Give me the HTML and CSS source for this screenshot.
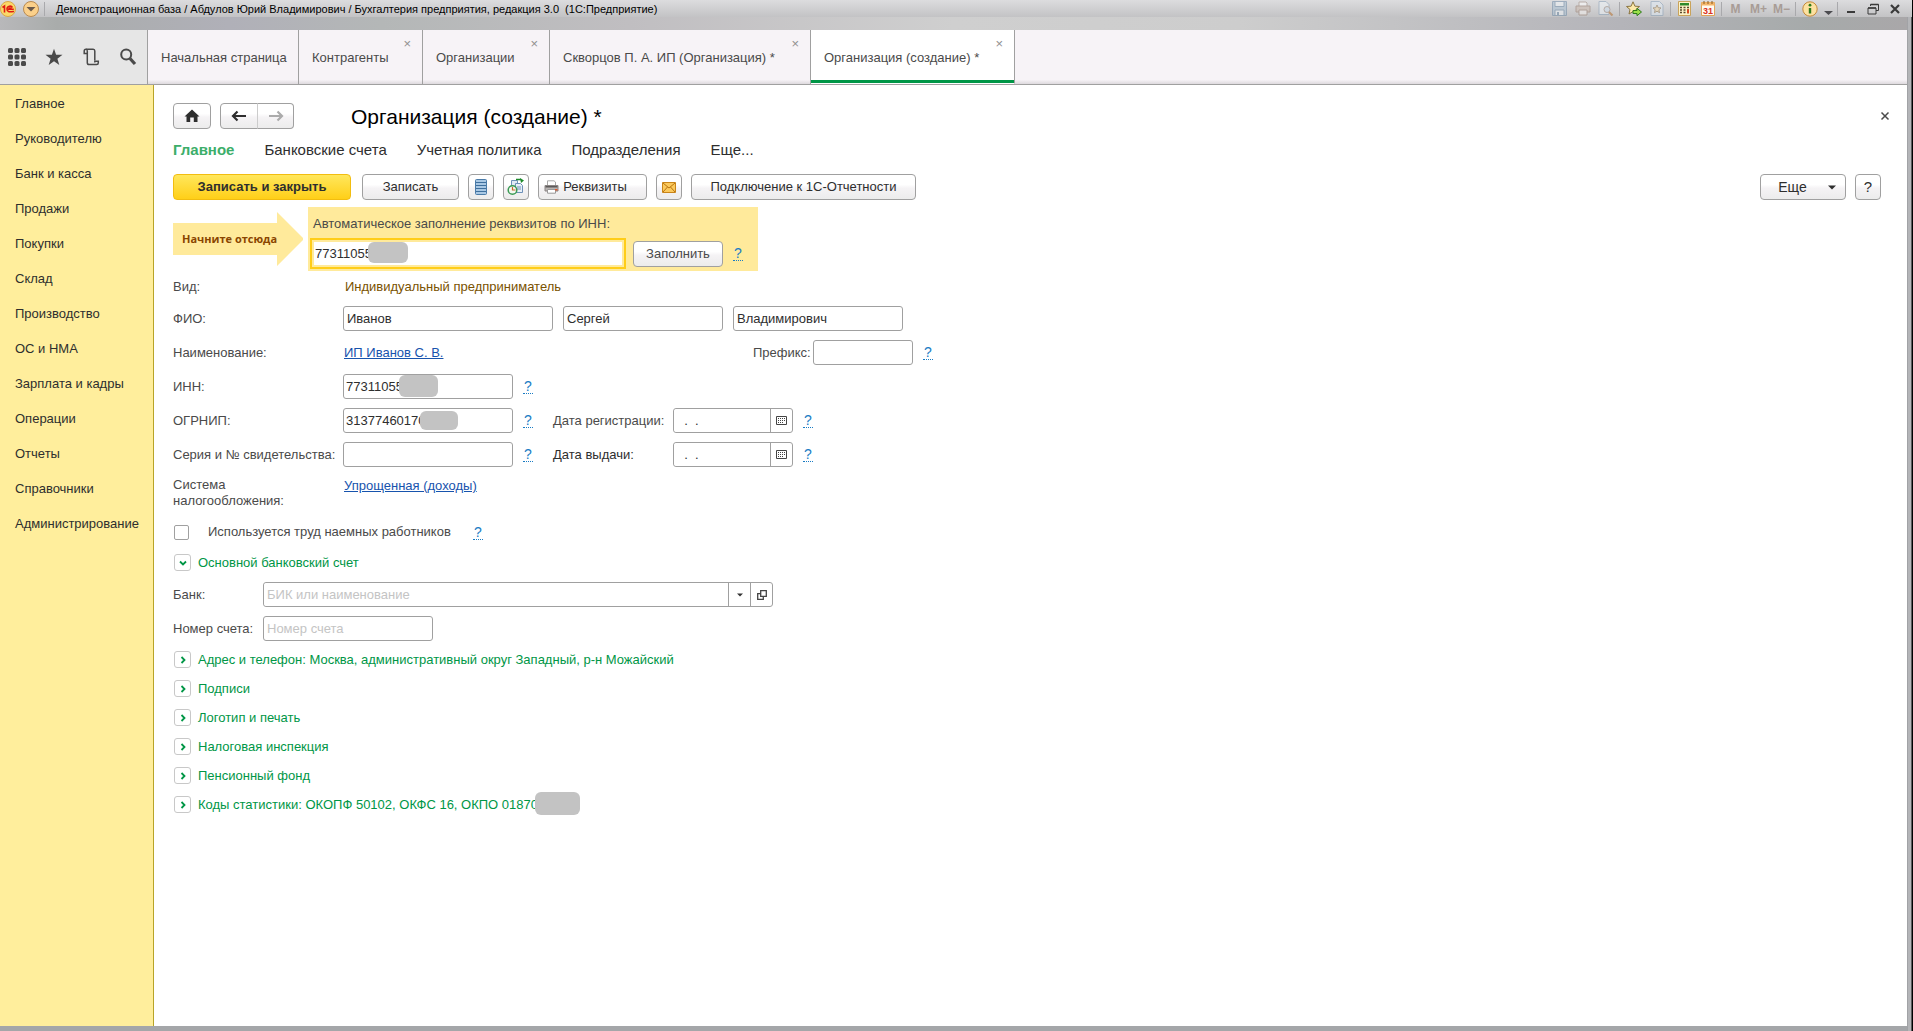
FILE: index.html
```html
<!DOCTYPE html>
<html lang="ru">
<head>
<meta charset="utf-8">
<title>Организация (создание)</title>
<link rel="stylesheet" href="styles.css">
</head>
<body>
<div class="window">
  <header class="titlebar">
    <svg class="logo" width="16" height="16" viewBox="0 0 16 16"><circle cx="8" cy="8" r="7.5" fill="#fbd968" stroke="#d9a64a"/><path d="M2.5 6.5 4.5 5v6.500M12.500 6.500C11.500 4.500 7 4.500 7 8s3 3 7 2.500M11.500 7.500C10 6.500 8.800 7 8.800 8.200h5" fill="none" stroke="#e01b12" stroke-width="1.600"/></svg>
    <button class="tb-btn" aria-label="Меню"><svg width="16" height="16" viewBox="0 0 16 16"><circle cx="8" cy="8" r="7.500" fill="#fbd08a" stroke="#b98a50"/><path d="M3.500 6h9L8 10.500z" fill="#6b5a4c"/></svg></button>
    <span class="tb-sep first"></span>
    <span class="tb-title">Демонстрационная база / Абдулов Юрий Владимирович / Бухгалтерия предприятия, редакция 3.0&nbsp; (1С:Предприятие)</span>
    <div class="tb-tools">
      <button class="tb-btn dim" aria-label="Сохранить"><svg width="15" height="15" viewBox="0 0 15 15"><path d="M.5.5h14v14H.5z" fill="#a9bfd2" stroke="#6f8ba6"/><path d="M3 .5h9v5H3zM3 9h9v5.500H3z" fill="#eef3f7" stroke="#6f8ba6"/><path d="M5 11h2v3H5z" fill="#6f8ba6"/></svg></button>
      <button class="tb-btn dim" aria-label="Печать"><svg width="16" height="15" viewBox="0 0 16 15"><path d="M4 5V1h7l1 1v3" fill="#fff" stroke="#a08c80"/><path d="M1 5h14v6H1z" fill="#cbb9ac" stroke="#977f70"/><path d="M4 9h8v5H4z" fill="#f5f1ee" stroke="#977f70"/></svg></button>
      <button class="tb-btn dim" aria-label="Просмотр"><svg width="16" height="15" viewBox="0 0 16 15"><path d="M1 .5h7l3 3v10H1z" fill="#eef3f7" stroke="#8aa1b8"/><circle cx="9" cy="8.500" r="3" fill="#cfe0ef" stroke="#a08c80"/><path d="m11 11 3.500 3.500" stroke="#b5702e" stroke-width="2"/></svg></button>
      <span class="tb-sep"></span>
      <button class="tb-btn" aria-label="В избранное"><svg width="16" height="16" viewBox="0 0 16 16"><path d="m7 .8 1.900 4.400 4.600.3-3.500 3 1 4.500L7 10.600 3 13l1-4.500-3.500-3 4.600-.3z" fill="#fde9a8" stroke="#8a7440"/><path d="M7 9.500h4V7.300l4.500 3.700-4.500 3.700v-2.200H7z" fill="#9be04a" stroke="#2f7a1c"/></svg></button>
      <button class="tb-btn dim" aria-label="Избранное"><svg width="14" height="15" viewBox="0 0 14 15"><path d="M1 .5h8.500L13 4v10.500H1z" fill="#dfe9f2" stroke="#8aa1b8"/><path d="m7 4 1.200 2.700 2.800.2-2.100 1.900.6 2.800L7 10.200l-2.500 1.400.6-2.800L3 6.900l2.800-.2z" fill="#f3dcae" stroke="#7d6440" stroke-width=".8"/></svg></button>
      <span class="tb-sep"></span>
      <button class="tb-btn" aria-label="Калькулятор"><svg width="14" height="15" viewBox="0 0 14 15"><path d="M.5.5h12v14H.5z" fill="#fdf3c8" stroke="#c9a35a"/><path d="M2 2h9v2.500H2z" fill="#2f8a2c"/><path d="M2 6.500h9M2 9h9M2 11.500h9" stroke="#5b4a2c" stroke-width="1.500" stroke-dasharray="2 1.500"/><path d="M9 8.300h2v4H9z" fill="#d9461e"/></svg></button>
      <button class="tb-btn" aria-label="Календарь"><svg width="14" height="15" viewBox="0 0 14 15"><path d="M.5 1.500h13v13H.5z" fill="#fffaf0" stroke="#e0a458"/><path d="M.5 1.500h13v3H.5z" fill="#f4b66a"/><path d="M3 0v3M7 0v3M11 0v3" stroke="#8a5a20"/><text x="7" y="13" text-anchor="middle" class="cal-num">31</text></svg></button>
      <span class="tb-sep"></span>
      <button class="tb-btn mem">M</button>
      <button class="tb-btn mem">M+</button>
      <button class="tb-btn mem">M−</button>
      <span class="tb-sep"></span>
      <button class="tb-btn" aria-label="Сведения"><svg width="16" height="16" viewBox="0 0 16 16"><circle cx="8" cy="8" r="7.200" fill="#fce1a0" stroke="#c58a3a"/><path d="M8 7v5.500" stroke="#2f7a1c" stroke-width="2.400"/><circle cx="8" cy="4.200" r="1.400" fill="#2f7a1c"/></svg></button>
      <button class="tb-btn drop" aria-label="Ещё"><svg width="9" height="14" viewBox="0 0 9 14"><path d="M0 9h9l-4.500 4z" fill="#4c4c50"/></svg></button>
      <span class="tb-sep"></span>
      <button class="tb-btn win" aria-label="Свернуть"><svg width="12" height="12" viewBox="0 0 12 12"><path d="M2 9h8" stroke="#3a3a3a" stroke-width="2"/></svg></button>
      <button class="tb-btn win" aria-label="Восстановить"><svg width="12" height="12" viewBox="0 0 12 12"><path d="M3.500 3V1.500h8v6H9" fill="none" stroke="#3a3a3a"/><path d="M1 5h8v6H1z" fill="none" stroke="#3a3a3a"/><path d="M1 5h8M3.500 1.500h8" stroke="#3a3a3a" stroke-width="1.500"/></svg></button>
      <button class="tb-btn win" aria-label="Закрыть"><svg width="12" height="12" viewBox="0 0 12 12"><path d="m2 2 8 8M10 2l-8 8" stroke="#3a3a3a" stroke-width="2.200"/></svg></button>
    </div>
  </header>
  <div class="glass"></div>

  <div class="tabbar">
    <div class="quick">
      <button aria-label="Разделы"><svg width="18" height="18" viewBox="0 0 18 18" fill="#4a4a4a"><rect width="5" height="5" rx="1.500"/><rect x="6.500" width="5" height="5" rx="1.500"/><rect x="13" width="5" height="5" rx="1.500"/><rect y="6.500" width="5" height="5" rx="1.500"/><rect x="6.500" y="6.500" width="5" height="5" rx="1.500"/><rect x="13" y="6.500" width="5" height="5" rx="1.500"/><rect y="13" width="5" height="5" rx="1.500"/><rect x="6.500" y="13" width="5" height="5" rx="1.500"/><rect x="13" y="13" width="5" height="5" rx="1.500"/></svg></button>
      <button aria-label="Избранное"><svg width="18" height="18" viewBox="0 0 18 18"><path d="m9 .8 2.100 5.900 6.400.1-5.100 3.900 1.900 6.200L9 13.200l-5.300 3.700 1.900-6.200L.5 6.800l6.400-.1z" fill="#4a4a4a"/></svg></button>
      <button aria-label="История"><svg width="18" height="18" viewBox="0 0 18 18" fill="none" stroke="#4a4a4a" stroke-width="1.500"><path d="M5 5.500H2.200V3.200c0-1.300.8-1.900 1.700-1.900h7.300c1 0 1.600.7 1.600 1.800v9.400"/><path d="M5.300 5.500V3.200c0-1.300-.6-1.900-1.200-1.900M5.300 5.500v9.200c0 1.200.8 1.800 1.800 1.800h7.600c1 0 1.600-.7 1.600-1.800v-1.500h-3.500v1.300"/></svg></button>
      <button aria-label="Поиск"><svg width="18" height="18" viewBox="0 0 18 18" fill="none" stroke="#4a4a4a"><circle cx="7.200" cy="6.500" r="5" stroke-width="2"/><path d="m11 10.500 5 5.500" stroke-width="3.200"/></svg></button>
    </div>
    <nav class="tabs">
      <a href="#" class="tab t1">Начальная страница</a>
      <a href="#" class="tab t2">Контрагенты<span class="tab-x">×</span></a>
      <a href="#" class="tab t3">Организации<span class="tab-x">×</span></a>
      <a href="#" class="tab t4">Скворцов П. А. ИП (Организация) *<span class="tab-x">×</span></a>
      <a href="#" class="tab t5 active">Организация (создание) *<span class="tab-x">×</span></a>
    </nav>
  </div>

  <div class="body">
    <nav class="sidebar">
      <a href="#">Главное</a>
      <a href="#">Руководителю</a>
      <a href="#">Банк и касса</a>
      <a href="#">Продажи</a>
      <a href="#">Покупки</a>
      <a href="#">Склад</a>
      <a href="#">Производство</a>
      <a href="#">ОС и НМА</a>
      <a href="#">Зарплата и кадры</a>
      <a href="#">Операции</a>
      <a href="#">Отчеты</a>
      <a href="#">Справочники</a>
      <a href="#">Администрирование</a>
    </nav>

    <main class="content">
      <div class="head">
        <button class="btn home" aria-label="Домой"><svg width="16" height="14" viewBox="0 0 16 14"><path d="M8 .5 15.500 7.500H13.500V13H9.800V8.500H6.200V13H2.500V7.500H.5z" fill="#2e2e2e"/></svg></button>
        <div class="history">
          <button class="btn" aria-label="Назад"><svg width="16" height="12" viewBox="0 0 16 12"><path d="M15 6H2M6.500 1.500 2 6l4.500 4.500" fill="none" stroke="#2e2e2e" stroke-width="2.200"/></svg></button>
          <button class="btn" aria-label="Вперед"><svg width="16" height="12" viewBox="0 0 16 12"><path d="M1 6h13M9.500 1.500 14 6l-4.500 4.500" fill="none" stroke="#ababab" stroke-width="2.200"/></svg></button>
        </div>
        <h1>Организация (создание) *</h1>
        <button class="close" aria-label="Закрыть"><svg width="10" height="10" viewBox="0 0 10 10"><path d="m1.500 1.500 7 7M8.500 1.500l-7 7" stroke="#4a4a4a" stroke-width="1.500"/></svg></button>
      </div>

      <nav class="subnav">
        <a href="#" class="current">Главное</a>
        <a href="#">Банковские счета</a>
        <a href="#">Учетная политика</a>
        <a href="#">Подразделения</a>
        <a href="#">Еще...</a>
      </nav>

      <div class="toolbar">
        <button class="btn primary">Записать и закрыть</button>
        <button class="btn save">Записать</button>
        <button class="btn icon" aria-label="Список"><svg width="12" height="16" viewBox="0 0 12 16"><rect x=".5" y=".5" width="11" height="15" rx="1" fill="#a9c8e4" stroke="#4a7ba8"/><path d="M1 3.500h10M1 6.500h10M1 9.500h10M1 12.500h10" stroke="#3f709e"/></svg></button>
        <button class="btn icon" aria-label="Отчет"><svg width="18" height="18" viewBox="0 0 18 18"><path d="M4.500 2.500h6v7h-6z" fill="#dfeaf5" stroke="#6d90b8"/><path d="M8.500 5.500h5l2 2v7h-7z" fill="#e8f0f8" stroke="#6d90b8"/><path d="M10 9h4M10 11h4" stroke="#6d90b8"/><path d="M9 1.500h5" stroke="#1d8a2c" stroke-width="1.500"/><path d="m13 0 4 2.500L14 5z" fill="#1d8a2c"/><circle cx="5.500" cy="12" r="4.300" fill="#f3f8f0" stroke="#3a9a54" stroke-width="1.500"/><path d="M5.500 9v3h3" fill="none" stroke="#c8662c" stroke-width="1.200"/></svg></button>
        <button class="btn print"><svg width="15" height="14" viewBox="0 0 15 14"><path d="M3.500 6V.8h6.500L11.500 2v4" fill="#fff" stroke="#a8a8a8"/><path d="M1 5.500h13v5.500H1z" fill="#b9b4b2" stroke="#8b8685"/><path d="M1.500 6h12v1.500h-12z" fill="#5d5a5a"/><path d="M3.500 9.500h8v3.700h-8z" fill="#fff" stroke="#999"/><path d="M11 9h2.500v1.500H11z" fill="#e0562c"/></svg>Реквизиты</button>
        <button class="btn icon" aria-label="Почта"><svg width="14" height="11" viewBox="0 0 14 11"><path d="M.5.500h13v10H.500z" fill="#fbc95c" stroke="#c98418"/><path d="m1 1 6 5 6-5M1 10l4.500-5M13 10 8.500 5" fill="none" stroke="#b9740f"/></svg></button>
        <button class="btn connect">Подключение к 1С-Отчетности</button>
        <button class="btn more">Еще<svg width="8" height="5" viewBox="0 0 8 5"><path d="M0 .5h8L4 4.500z" fill="#2e2e2e"/></svg></button>
        <button class="btn icon help">?</button>
      </div>

      <form class="form">
        <div class="autofill">
          <div class="start"><svg width="130" height="54" viewBox="0 0 130 54"><path d="M0 11h104V0l27 27-27 27V43H0z" fill="#ffea9b"/></svg><span>Начните отсюда</span></div>
          <div class="fillbox">
            <label for="auto">Автоматическое заполнение реквизитов по ИНН:</label>
            <div class="fillrow">
              <span class="field auto"><input id="auto" type="text" value="77311055"><i class="mask m1"></i></span>
              <button type="button" class="btn fill">Заполнить</button>
              <a href="#" class="q">?</a>
            </div>
          </div>
        </div>

        <div class="row short"><span class="lbl">Вид:</span><span class="kind">Индивидуальный предприниматель</span></div>
        <div class="row names">
          <label class="lbl" for="fam">ФИО:</label>
          <input id="fam" class="w210" type="text" value="Иванов">
          <input class="w160" type="text" value="Сергей" aria-label="Имя">
          <input class="w170" type="text" value="Владимирович" aria-label="Отчество">
        </div>
        <div class="row">
          <span class="lbl">Наименование:</span><a href="#" class="link title-link">ИП Иванов С. В.</a>
          <label class="prefix-lbl" for="prefix">Префикс:</label><input id="prefix" class="w100" type="text"><a href="#" class="q">?</a>
        </div>
        <div class="row">
          <label class="lbl" for="inn">ИНН:</label><span class="field"><input id="inn" class="w170" type="text" value="77311055"><i class="mask m2"></i></span><a href="#" class="q">?</a>
        </div>
        <div class="row">
          <label class="lbl" for="ogrn">ОГРНИП:</label><span class="field"><input id="ogrn" class="w170" type="text" value="31377460170"><i class="mask m3"></i></span><a href="#" class="q">?</a>
          <label class="date-lbl" for="d1">Дата регистрации:</label>
          <span class="combo date"><input id="d1" type="text" value="&nbsp; .&nbsp; ."><button type="button" aria-label="Календарь"><svg width="11" height="9" viewBox="0 0 11 9"><path d="M.5.500h10v8H.500z" fill="none" stroke="#444"/><path d="M2 2.500h7M2 4.500h7M2 6.500h5" stroke="#444" stroke-dasharray="1 1"/></svg></button></span><a href="#" class="q">?</a>
        </div>
        <div class="row">
          <label class="lbl" for="ser">Серия и № свидетельства:</label><input id="ser" class="w170" type="text"><a href="#" class="q">?</a>
          <label class="date-lbl dark" for="d2">Дата выдачи:</label>
          <span class="combo date"><input id="d2" type="text" value="&nbsp; .&nbsp; ."><button type="button" aria-label="Календарь"><svg width="11" height="9" viewBox="0 0 11 9"><path d="M.5.500h10v8H.500z" fill="none" stroke="#444"/><path d="M2 2.500h7M2 4.500h7M2 6.500h5" stroke="#444" stroke-dasharray="1 1"/></svg></button></span><a href="#" class="q">?</a>
        </div>
        <div class="row tax"><span class="lbl">Система<br>налогообложения:</span><a href="#" class="link">Упрощенная (доходы)</a></div>
        <div class="row check"><input type="checkbox" id="hire"><label for="hire">Используется труд наемных работников</label><a href="#" class="q">?</a></div>

        <button type="button" class="group open"><span class="exp"><svg width="8" height="8" viewBox="0 0 8 8"><path d="m1 2.500 3 3 3-3" fill="none" stroke="#009646" stroke-width="1.800"/></svg></span>Основной банковский счет</button>
        <div class="row bank"><label class="lbl" for="bank">Банк:</label><span class="combo wide"><input id="bank" type="text" placeholder="БИК или наименование"><button type="button" aria-label="Выбрать"><svg width="6" height="4" viewBox="0 0 6 4"><path d="M0 .500h6L3 3.500z" fill="#333"/></svg></button><button type="button" aria-label="Открыть"><svg width="10" height="10" viewBox="0 0 10 10"><path d="M3.700.700h5.600v5.600H3.700zM3.500 3.700H.700v5.600h5.600V6.500" fill="none" stroke="#444" stroke-width="1.300"/></svg></button></span></div>
        <div class="row bank"><label class="lbl" for="acc">Номер счета:</label><input id="acc" class="w170" type="text" placeholder="Номер счета"></div>

        <div class="groups">
          <button type="button" class="group"><span class="exp"><svg width="8" height="8" viewBox="0 0 8 8"><path d="m2.500 1 3 3-3 3" fill="none" stroke="#009646" stroke-width="1.800"/></svg></span>Адрес и телефон: Москва, административный округ Западный, р-н Можайский</button>
          <button type="button" class="group"><span class="exp"><svg width="8" height="8" viewBox="0 0 8 8"><path d="m2.500 1 3 3-3 3" fill="none" stroke="#009646" stroke-width="1.800"/></svg></span>Подписи</button>
          <button type="button" class="group"><span class="exp"><svg width="8" height="8" viewBox="0 0 8 8"><path d="m2.500 1 3 3-3 3" fill="none" stroke="#009646" stroke-width="1.800"/></svg></span>Логотип и печать</button>
          <button type="button" class="group"><span class="exp"><svg width="8" height="8" viewBox="0 0 8 8"><path d="m2.500 1 3 3-3 3" fill="none" stroke="#009646" stroke-width="1.800"/></svg></span>Налоговая инспекция</button>
          <button type="button" class="group"><span class="exp"><svg width="8" height="8" viewBox="0 0 8 8"><path d="m2.500 1 3 3-3 3" fill="none" stroke="#009646" stroke-width="1.800"/></svg></span>Пенсионный фонд</button>
          <button type="button" class="group"><span class="exp"><svg width="8" height="8" viewBox="0 0 8 8"><path d="m2.500 1 3 3-3 3" fill="none" stroke="#009646" stroke-width="1.800"/></svg></span>Коды статистики: ОКОПФ 50102, ОКФС 16, ОКПО 01870<i class="mask m4"></i></button>
        </div>
      </form>
    </main>
  </div>
</div>
</body>
</html>
```
FILE: styles.css
```css
* { box-sizing: border-box; }
body { margin: 0; font: 13px/16px "Liberation Sans", Arial, sans-serif; color: #4a4a4a; background: #fff; }
button, input { font: inherit; color: #2e2e2e; margin: 0; }
button { padding: 0; border: 0; background: none; }
a { color: inherit; text-decoration: none; }
svg { display: block; flex: none; }

.window { display: flex; flex-direction: column; min-height: 100vh; padding-right: 6px; padding-bottom: 5px; background: linear-gradient(to right, transparent calc(100% - 6px), #8f9094 calc(100% - 6px), #b4b5b8 calc(100% - 5px), #b4b5b8 calc(100% - 2px), #000 calc(100% - 1px)), #a4a6a9; }

.titlebar { display: flex; align-items: center; height: 17px; margin-right: -5px; padding-right: 7px; background: linear-gradient(#dcdcde, #c3c3c5); }
.logo { margin-right: 7px; }
.tb-btn { display: flex; align-items: center; justify-content: center; min-width: 16px; height: 16px; }
.tb-sep { width: 1px; height: 14px; background: #a9a9ac; margin: 0 1px; }
.tb-sep.first { margin: 0 5px; }
.tb-title { margin-left: 6px; font-size: 11px; line-height: 14px; color: #000; white-space: nowrap; }
.tb-tools { display: flex; align-items: center; gap: 2px; margin-left: auto; }
.tb-tools .tb-btn { min-width: 21px; }
.tb-tools .drop { min-width: 12px; }
.tb-tools .win { min-width: 20px; }
.dim { opacity: .55; }
.tb-tools .mem { color: #a89c96; font-weight: bold; font-size: 12px; }
.cal-num { font: bold 9px "Liberation Sans", Arial, sans-serif; fill: #d9301e; }
.glass { height: 13px; background: linear-gradient(to right, #b8b8ba, #a9acab 3%, #b0b0b8 12%, #b4b7b7 20%, #c0bec1 33%, #cfcfcf 50%, #cdcdcd 65%, #b4b4b9 85%, #a6aaaa 95%, #a9a7a9); }

.tabbar { display: flex; height: 55px; border-bottom: 1px solid #a0a0a0; background: linear-gradient(#f7f3f7 92%, #dedade); }
.quick { display: flex; align-items: center; gap: 19px; width: 147px; padding-left: 8px; background: #e6e6e6; }
.tabs { display: flex; border-left: 1px solid #a0a0a0; }
.tab { position: relative; display: flex; align-items: center; padding: 1px 13px 0; border-right: 1px solid #a0a0a0; white-space: nowrap; }
.t1 { width: 151px; }
.t2 { width: 124px; }
.t3 { width: 127px; }
.t4 { width: 261px; }
.t5 { width: 204px; }
.tab-x { position: absolute; top: 6px; right: 11px; color: #909090; }
.active { padding-top: 2px; background: #fff; border-bottom: 1px solid #fff; box-shadow: inset 0 -3px #009646; }

.body { display: flex; flex: 1; }
.sidebar { width: 154px; flex: none; padding-top: 1px; background: #ffee9c; border-right: 1px solid #b8a428; color: #2e2e2e; }
.sidebar a { display: flex; align-items: center; height: 35px; padding-left: 15px; }
.content { flex: 1; min-width: 0; padding: 18px 26px 0 19px; background: #fff; }

.btn { display: inline-flex; align-items: center; justify-content: center; height: 26px; border: 1px solid #a0a0a0; border-radius: 4px; background: linear-gradient(#fff 40%, #f5f3f5 55%, #ececec); white-space: nowrap; }
.head { display: flex; align-items: center; height: 26px; }
.home { width: 38px; margin-right: 9px; }
.history { display: flex; }
.history .btn { width: 38px; border-radius: 4px 0 0 4px; }
.history .btn + .btn { width: 37px; margin-left: -1px; border-radius: 0 4px 4px 0; border-left-color: #ccc; }
h1 { margin: 0 0 0 57px; padding-top: 2px; font-size: 21px; line-height: 24px; font-weight: normal; color: #000; }
.close { margin-left: auto; margin-right: -9px; }
.subnav { display: flex; gap: 30px; margin-top: 11px; font-size: 15px; line-height: 20px; color: #2e2e2e; }
.subnav .current { color: #3cae6a; font-weight: bold; }

.toolbar { display: flex; gap: 9px; margin-top: 14px; }
.toolbar .primary { width: 178px; margin-right: 2px; border-color: #f2bd10; background: linear-gradient(#ffe75c, #ffcf18); font-weight: bold; }
.save { width: 97px; }
.icon { width: 26px; }
.print { width: 109px; gap: 4px; padding-right: 14px; }
.connect { width: 225px; }
.more { width: 86px; gap: 21px; margin-left: auto; padding-left: 8px; font-size: 14px; }
.help { font-size: 15px; }

.autofill { display: flex; gap: 5px; margin-top: 7px; }
.start { position: relative; width: 130px; padding-top: 5px; font: bold 11px/16px "Open Sans", sans-serif; color: #8a4500; }
.start span { position: absolute; left: 9px; top: 24px; white-space: nowrap; }
.fillbox { width: 450px; height: 64px; padding: 9px 0 0 2px; background: #ffea9b; }
.fillbox label { margin-left: 3px; }
.fillrow { display: flex; align-items: center; margin-top: 6px; }
.field { position: relative; display: inline-flex; }
.fill { width: 90px; margin-left: 7px; color: #4a4a4a; }
.mask { position: absolute; background: #c3c3c3; border-radius: 6px; }
.m1 { left: 58px; top: 4px; width: 40px; height: 21px; }
.m2 { left: 56px; top: 1px; width: 39px; height: 22px; }
.m3 { left: 77px; top: 3px; width: 38px; height: 19px; }
.m4 { left: 362px; top: -4px; width: 45px; height: 23px; }

input[type="text"] { height: 25px; padding: 0 2px; border: 1px solid #a0a0a0; border-radius: 3px; background: #fff; }
input[type="text"]::placeholder { color: #c4c4c4; opacity: 1; }
.names input[type="text"], .bank input[type="text"] { padding: 0 3px; }
.auto input[type="text"] { width: 316px; height: 31px; padding: 0 3px; border: 2px solid #ffcd19; border-radius: 0; box-shadow: inset 0 0 0 2px #ffea9b; }
.w100 { width: 100px; }
.w160 { width: 160px; }
.w170 { width: 170px; }
.w210 { width: 210px; }
.row { display: flex; align-items: center; height: 25px; margin-bottom: 9px; }
.lbl { width: 170px; flex: none; white-space: nowrap; }
.short { margin: 3px 0 7px; }
.kind { padding-left: 2px; color: #7a5200; }
.names { gap: 10px; }
.names .lbl { margin-right: -10px; }
.q { margin-left: 10px; width: 10px; font-size: 14px; line-height: 14px; text-align: center; color: #1a7cc4; border-bottom: 1px dotted #1a7cc4; }
.link { margin-left: 1px; color: #1753ad; text-decoration: underline; }
.title-link { width: 409px; }
.prefix-lbl { width: 60px; }
.date-lbl { width: 120px; margin-left: 20px; }
.dark { color: #2e2e2e; }
.combo { display: flex; height: 25px; border: 1px solid #a0a0a0; border-radius: 3px; overflow: hidden; }
.combo input[type="text"] { flex: 1; min-width: 0; height: 23px; padding: 0 3px; border: 0; }
.combo button { display: flex; align-items: center; justify-content: center; width: 22px; border-left: 1px solid #a0a0a0; }
.date { width: 120px; }
.wide { width: 510px; }
.tax { height: 34px; margin: 0 0 14px; }
.tax .link { align-self: flex-start; margin-top: 2px; }
.check { height: 16px; margin-bottom: 14px; }
.check input { appearance: none; width: 15px; height: 15px; margin: 0 19px 0 1px; border: 1px solid #a0a0a0; border-radius: 2px; background: #fff; }
.check .q { margin-left: 22px; }
.group { position: relative; display: flex; align-items: center; gap: 7px; height: 17px; padding-left: 1px; color: #009646; white-space: nowrap; }
.exp { display: flex; align-items: center; justify-content: center; width: 17px; height: 17px; border: 1px solid #c8c8c8; border-radius: 3px; }
.open { margin-bottom: 11px; }
.bank .lbl { width: 90px; }
.groups { display: flex; flex-direction: column; align-items: flex-start; gap: 12px; margin-top: 10px; }
```
